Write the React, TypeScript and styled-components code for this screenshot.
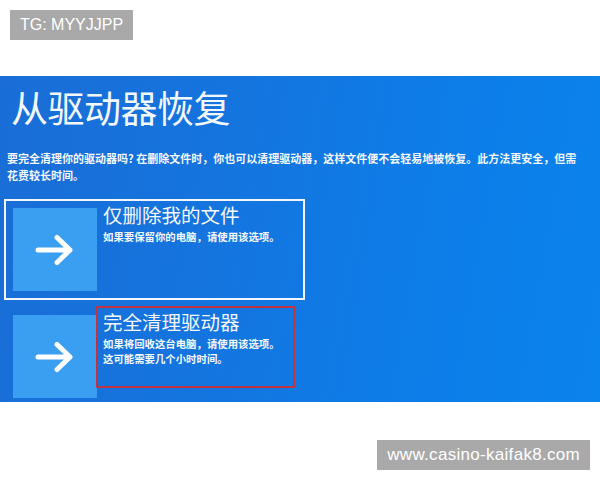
import styled, { createGlobalStyle } from 'styled-components';

const GlobalStyle = createGlobalStyle`
  html, body {
    margin: 0;
    padding: 0;
    background: #ffffff;
  }
  body {
    font-family: "Noto Sans CJK SC", "Noto Sans", sans-serif;
  }
`;

const Page = styled.div`
  width: 600px;
  height: 480px;
  display: flex;
  flex-direction: column;
  overflow: hidden;
`;

const TopBar = styled.div`
  height: 76px;
  padding: 10px 0 0 10px;
  box-sizing: border-box;
`;

const Badge = styled.div<{ $size?: number; $spacing?: number }>`
  display: inline-block;
  height: 30px;
  line-height: 30px;
  padding: 0 10px;
  background: #a9a9a9;
  color: #ffffff;
  font-family: "Liberation Sans", Arial, sans-serif;
  font-size: ${(p) => p.$size ?? 16}px;
  letter-spacing: ${(p) => p.$spacing ?? 0}px;
  white-space: nowrap;
`;

const Screen = styled.div`
  height: 326px;
  overflow: hidden;
  background: linear-gradient(100deg, #1a6dd6 0%, #1574de 35%, #0d7de8 70%, #0b83ec 100%);
  color: #f4f8ff;
  padding: 0 0 0 4px;
  box-sizing: border-box;
  display: flex;
  flex-direction: column;
`;

const Title = styled.h1`
  margin: 7px 0 0 7px;
  font-size: 37px;
  line-height: 48px;
  font-weight: 400;
  letter-spacing: -0.5px;
`;

const Intro = styled.p`
  margin: 19px 0 0 3px;
  width: 576px;
  font-size: 11px;
  line-height: 17px;
  font-weight: 700;
`;

const Options = styled.div`
  margin-top: 15px;
  display: flex;
  flex-direction: column;
  gap: 6px;
`;

const Option = styled.div<{ $outlined?: boolean }>`
  position: relative;
  width: 301px;
  box-sizing: border-box;
  border: 2px solid ${(p) => (p.$outlined ? '#f2f6ff' : 'transparent')};
  padding: 7px;
  display: flex;
  gap: 6px;
`;

const Tile = styled.div`
  width: 84px;
  height: 83px;
  flex: none;
  background: #3a9ff0;
  display: flex;
  align-items: center;
  justify-content: center;
`;

const OptionText = styled.div`
  display: flex;
  flex-direction: column;
  margin-top: -4px;
`;

const OptionTitle = styled.div`
  font-size: 19.5px;
  line-height: 22px;
  font-weight: 400;
`;

const OptionDesc = styled.div`
  margin-top: 3px;
  font-size: 10.4px;
  line-height: 15px;
  font-weight: 700;
`;

const Highlight = styled.div`
  position: absolute;
  left: 90px;
  top: -2px;
  width: 199px;
  height: 82px;
  box-sizing: border-box;
  border: 2px solid #c3333f;
  border-radius: 1px;
`;

const Footer = styled.div`
  flex: 1;
  display: flex;
  justify-content: flex-end;
  align-items: flex-start;
  padding: 38px 10px 0 0;
`;

const Arrow = () => (
  <svg width="40" height="32" viewBox="0 0 40 32">
    <path
      d="M3 16 H35 M22 3.5 L35 16 L22 28.5"
      fill="none"
      stroke="#ffffff"
      strokeWidth="5"
      strokeLinecap="round"
      strokeLinejoin="round"
    />
  </svg>
);

export default function App() {
  return (
    <Page>
      <GlobalStyle />
      <TopBar>
        <Badge>TG: MYYJJPP</Badge>
      </TopBar>
      <Screen>
        <Title>从驱动器恢复</Title>
        <Intro>
          要完全清理你的驱动器吗? 在删除文件时，你也可以清理驱动器，这样文件便不会轻易地被恢复。此方法更安全，但需花费较长时间。
        </Intro>
        <Options>
          <Option $outlined>
            <Tile>
              <Arrow />
            </Tile>
            <OptionText>
              <OptionTitle>仅删除我的文件</OptionTitle>
              <OptionDesc>如果要保留你的电脑，请使用该选项。</OptionDesc>
            </OptionText>
          </Option>
          <Option>
            <Tile>
              <Arrow />
            </Tile>
            <OptionText>
              <OptionTitle>完全清理驱动器</OptionTitle>
              <OptionDesc>
                如果将回收这台电脑，请使用该选项。
                <br />
                这可能需要几个小时时间。
              </OptionDesc>
            </OptionText>
            <Highlight />
          </Option>
        </Options>
      </Screen>
      <Footer>
        <Badge $size={17} $spacing={0.3}>www.casino-kaifak8.com</Badge>
      </Footer>
    </Page>
  );
}
